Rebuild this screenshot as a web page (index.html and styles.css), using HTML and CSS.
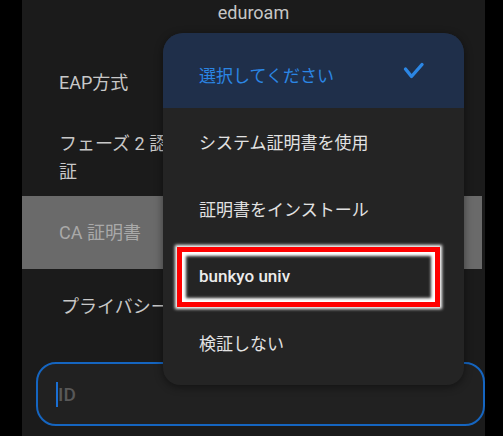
FILE: index.html
```html
<!DOCTYPE html>
<html lang="ja">
<head>
    <meta charset="UTF-8">
    <meta name="viewport" content="width=device-width, initial-scale=1.0">
    <title>eduroam</title>
    <link rel="stylesheet" href="styles.css">
</head>
<body>
    <div class="screen">
        <div class="gutter"></div>
        <div class="panel">
            <div class="title">eduroam</div>

            <div class="row row-eap">
                <span class="label">EAP方式</span>
            </div>
            <div class="row row-phase">
                <span class="label">フェーズ 2 認証</span>
            </div>
            <div class="row row-ca">
                <span class="label">CA 証明書</span>
            </div>
            <div class="row row-privacy">
                <span class="label">プライバシー</span>
            </div>

            <div class="field">
                <span class="caret"></span>
                <span class="placeholder">ID</span>
            </div>

            <!-- dropdown over the form -->
            <ul class="menu">
                <li class="item selected">
                    <span>選択してください</span>
                    <svg class="check" width="24" height="20" viewBox="0 0 24 20">
                        <polyline points="3.5,8 9.5,15.5 20,3.5" fill="none" stroke="#2b86e4" stroke-width="3.4" stroke-linecap="round" stroke-linejoin="round"/>
                    </svg>
                </li>
                <li class="item">システム証明書を使用</li>
                <li class="item">証明書をインストール</li>
                <li class="item marked">
                    <span class="mark"></span>
                    <span class="latin">bunkyo univ</span>
                </li>
                <li class="item">検証しない</li>
            </ul>
        </div>
        <div class="gutter"></div>
    </div>
</body>
</html>
```

FILE: styles.css
```css
html, body {
    margin: 0;
    padding: 0;
    background: #000;
}
body {
    width: 503px;
    height: 436px;
    overflow: hidden;
    font-family: Roboto, "Noto Sans CJK JP", sans-serif;
}
.screen {
    display: flex;
    height: 436px;
}
.gutter {
    flex: 1;
    background: #000;
}
.screen .gutter:first-child {
    flex: 0 0 22px;
}
.panel {
    flex: 0 0 462px;
    background: #1b1b1b;
    position: relative;
    display: flex;
    flex-direction: column;
}
.title {
    height: 46px;
    line-height: 26px;
    text-align: center;
    color: #c6c6c6;
    font-size: 18px;
}
.row {
    display: flex;
    align-items: center;
    padding-left: 37px;
}
.label {
    width: 122px;
    font-size: 18px;
    line-height: 28px;
    color: #c8c8c8;
}
.row-eap { height: 74px; }
.row-phase { height: 76px; }
.row-ca {
    height: 73px;
    background: #6a6a6a;
    margin-right: 3px;
}
.row-ca .label { color: #a9a9a9; }
.row-privacy { height: 76px; }
.row-privacy .label { padding-left: 2px; }

.field {
    margin: 17px 0 0 14px;
    width: 427px;
    height: 60px;
    border: 2px solid #1565c0;
    border-radius: 20px;
    background: #212121;
    display: flex;
    align-items: center;
    padding-left: 18px;
    box-sizing: content-box;
}
.caret {
    width: 2px;
    height: 25px;
    background: #1a6fd4;
}
.placeholder {
    color: #585858;
    font-size: 19px;
    font-weight: 500;
}

.menu {
    position: absolute;
    left: 141px;
    top: 33px;
    width: 301px;
    margin: 0;
    padding: 0 0 9px;
    list-style: none;
    background: #242424;
    border-radius: 20px 20px 17px 17px;
    box-shadow: 0 2px 8px rgba(0, 0, 0, 0.45);
    overflow: hidden;
}
.item {
    height: 67px;
    display: flex;
    align-items: center;
    padding-left: 36px;
    font-size: 17px;
    color: #e2e2e2;
    position: relative;
}
.selected {
    height: 75px;
    padding-top: 8px;
    box-sizing: border-box;
    background: #1f2f4a;
    color: #2b86e4;
    justify-content: space-between;
    padding-right: 38px;
}
.check {
    margin-top: -8px;
}
.latin {
    font-weight: 500;
    color: #ececec;
}
.mark {
    position: absolute;
    left: 14px;
    top: 5px;
    width: 253px;
    height: 50px;
    border: 5px solid #ff0000;
    box-shadow: 0 0 3px 2px #fff, inset 0 0 3px 4px #fff;
}
```
